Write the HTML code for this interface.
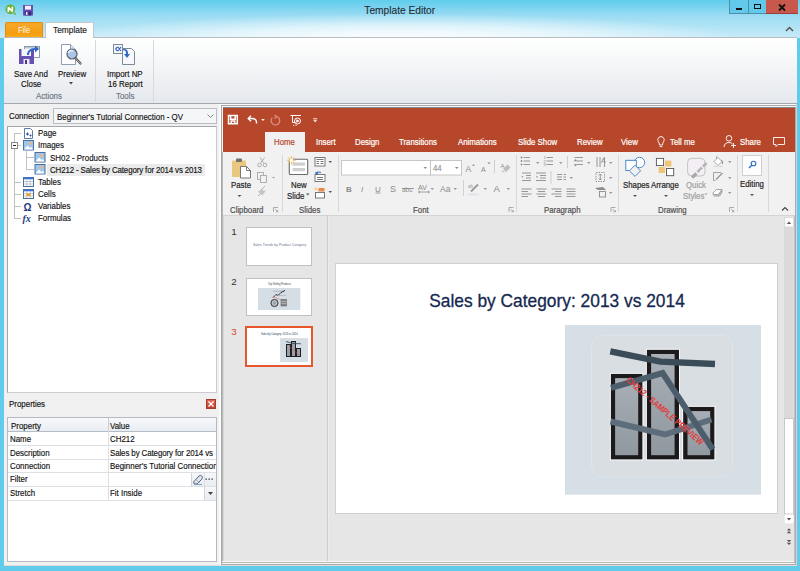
<!DOCTYPE html>
<html><head><meta charset="utf-8">
<style>
*{margin:0;padding:0;box-sizing:border-box}
html,body{width:800px;height:571px;overflow:hidden}
body{position:relative;background:#61cbec;font-family:"Liberation Sans",sans-serif;color:#222}
.a{position:absolute}
.t{position:absolute;white-space:nowrap;line-height:10px;font-size:8.8px;color:#111;-webkit-text-stroke:0.15px currentColor;transform:scaleX(.9);transform-origin:0 0}
svg{position:absolute;overflow:visible}
#title{left:0;top:0;width:800px;height:38px;background:radial-gradient(ellipse 340px 24px at 400px 38px,rgba(255,255,255,.95),rgba(255,255,255,.6) 50%,rgba(255,255,255,0)),linear-gradient(#5fcdec 0px,#6fd0ee 4px,#9bdcf3 16px,#c4eaf8 36px)}
#ribbon{left:4px;top:37px;width:793px;height:67px;background:linear-gradient(#ffffff,#fbfcfc 15%,#e5e8ed);border-top:1px solid #b9bcc0;border-bottom:1px solid #a4a8ac}
#leftp{left:4px;top:104px;width:217px;height:462px;background:#f0f0f0}
#ppt{left:221px;top:105px;width:576px;height:461px;background:#f6f6f6;border-left:1px solid #a4a6a8;border-top:1px solid #a4a6a8}
.tp{position:absolute;white-space:nowrap;line-height:10px;font-size:8.5px;color:#262626;-webkit-text-stroke:0.2px currentColor;transform:scaleX(.92);transform-origin:0 0}
.w{color:#fff}
.g{color:#444}
.pr{color:#262626}
.dis{color:#a6a6a6}
</style></head><body>
<!-- ===== TITLE BAR ===== -->
<div class="a" id="title"></div>
<svg style="left:0;top:0" width="40" height="20">
 <circle cx="10.3" cy="9.3" r="4.9" fill="#6cb33f"/>
 <circle cx="14.8" cy="13.8" r="1.1" fill="#6cb33f"/>
 <path d="M8.3 11.9V7.2L12.3 11.4V6.7" fill="none" stroke="#fff" stroke-width="1.6" stroke-linejoin="bevel"/>
 <rect x="23" y="5" width="10" height="10.5" fill="#6b4fb0"/>
 <rect x="25" y="5.8" width="6" height="3.8" fill="#f2f0f6"/>
 <rect x="24.5" y="11" width="7" height="4.5" fill="#4e3a96"/>
 <rect x="26" y="12" width="1.5" height="3" fill="#e8e4f0"/>
 <rect x="29" y="12" width="1.5" height="3" fill="#2d2070"/>
</svg>
<div class="t" style="left:364.3px;top:4.5px;font-size:10.2px;line-height:12px;color:#222b33;transform:none;-webkit-text-stroke:0.1px currentColor">Template Editor</div>
<div class="a" style="left:729px;top:0;width:20px;height:14px;border:1px solid #4f8ea6;border-top:none;background:#63c9ea"></div>
<div class="a" style="left:736px;top:8px;width:6px;height:2px;background:#111"></div>
<div class="a" style="left:748px;top:0;width:19px;height:14px;border:1px solid #4f8ea6;border-top:none;background:#63c9ea"></div>
<div class="a" style="left:754px;top:4px;width:7px;height:5px;border:1.5px solid #111"></div>
<div class="a" style="left:766px;top:0;width:32px;height:14px;background:#c9584c;border-bottom:1px solid #9a4038"></div>
<svg style="left:778px;top:4px" width="8" height="7"><path d="M1 0.5L7 6.5M7 0.5L1 6.5" stroke="#111" stroke-width="1.8"/></svg>
<div class="a" style="left:5px;top:22px;width:38px;height:16px;background:linear-gradient(#f7a82a,#f59d10 70%,#f8b020);border:1px solid #e08e10;border-bottom:none;border-radius:2px 2px 0 0"></div>
<div class="t" style="left:17.5px;top:24.8px;color:#fff8ec;-webkit-text-stroke:0;transform:scaleX(.86)">File</div>
<div class="a" style="left:45px;top:22px;width:49px;height:16px;background:#fff;border:1px solid #c6c9cc;border-bottom:none"></div>
<div class="t" style="left:53px;top:24.8px;color:#222;transform:scaleX(.95)">Template</div>
<div class="a" style="left:46px;top:37px;width:47px;height:1.5px;background:#fff;z-index:2"></div>
<svg style="left:785px;top:26px" width="9" height="6"><path d="M1 5L4.5 1.5L8 5" stroke="#555" stroke-width="1.5" fill="none"/></svg>

<!-- ===== APP RIBBON ===== -->
<div class="a" id="ribbon"></div>
<div class="a" style="left:95px;top:40px;width:1px;height:62px;background:#d6d9dd"></div>
<div class="a" style="left:153px;top:40px;width:1px;height:62px;background:#d6d9dd"></div>
<svg style="left:18px;top:45px" width="24" height="20">
 <rect x="6.5" y="1.5" width="15" height="11" fill="#fff" stroke="#8e9ba6"/>
 <rect x="7" y="2" width="14" height="1.5" fill="#b8c4ce"/>
 <rect x="1" y="4" width="15" height="15" fill="#6650b4"/>
 <rect x="3.5" y="4" width="9.5" height="7" fill="#f4f4f8"/>
 <rect x="5.5" y="14" width="6" height="5" fill="#eceaf4"/>
 <rect x="7" y="15" width="2" height="4" fill="#4a3a8c"/>
 <path d="M9 10C9 6 12 3 17 3L17 0.5L21 4L17 7.5L17 5C13 5 11 7 11 10Z" fill="#2f66c9"/>
</svg>
<svg style="left:60px;top:44px" width="24" height="22">
 <path d="M1.5 0.5H10.5L15.5 5.5V20.5H1.5Z" fill="#fff" stroke="#8da0b4"/>
 <path d="M10.5 0.5V5.5H15.5" fill="#dde6f0" stroke="#8da0b4"/>
 <circle cx="12" cy="10" r="5" fill="#a9c6ea" stroke="#555c66" stroke-width="1.2"/>
 <path d="M8 9C9 7 11 6 13 7" stroke="#eaf2fb" stroke-width="1.5" fill="none"/>
 <path d="M15.5 14L20.5 19.5" stroke="#444" stroke-width="2.2" stroke-linecap="round"/>
 <path d="M15.5 14L20.5 19.5" stroke="#ddd" stroke-width="0.8" stroke-linecap="round"/>
</svg>
<svg style="left:113px;top:43px" width="24" height="23">
 <rect x="0.5" y="1.5" width="9" height="9" fill="#f4f6f8" stroke="#7d8a96"/>
 <path d="M2.5 6L4.5 4M2.5 6L4.5 8M5 4L8 8M8 4L5 8" stroke="#2f5fc0" stroke-width="1.1" fill="none"/>
 <path d="M9.5 5.5H18.5L21.5 8.5V21.5H9.5Z" fill="#f6f8fb" stroke="#7d8a96"/>
 <path d="M10 6C13 5.5 15 7 15 10V11L17 11L14 15L11 11L13 11V10C13 8 12 7 10 7.5Z" fill="#2f66c9"/>
</svg>
<div class="t" style="left:13.8px;top:68.5px">Save And</div>
<div class="t" style="left:20.7px;top:78.5px">Close</div>
<div class="t" style="left:57.8px;top:68.5px">Preview</div>
<svg style="left:69px;top:82px" width="5" height="3"><path d="M0 0H4L2 2.5Z" fill="#444"/></svg>
<div class="t" style="left:36.4px;top:91px;color:#6b7383">Actions</div>
<div class="t" style="left:106.5px;top:69px">Import NP</div>
<div class="t" style="left:108px;top:79px">16 Report</div>
<div class="t" style="left:115.5px;top:91px;color:#6b7383">Tools</div>

<!-- ===== LEFT PANEL ===== -->
<div class="a" id="leftp"></div>
<div class="t" style="left:8.75px;top:110.7px">Connection</div>
<div class="a" style="left:53px;top:108px;width:164px;height:16px;background:#f5f6f7;border:1px solid #b9bec4"></div>
<div class="t" style="left:56.5px;top:111.6px">Beginner's Tutorial Connection - QV</div>
<svg style="left:207px;top:114px" width="7" height="5"><path d="M0.5 0.5L3.5 3.5L6.5 0.5" stroke="#888" stroke-width="1" fill="none"/></svg>
<!-- tree box -->
<div class="a" style="left:7px;top:126px;width:210px;height:267px;background:#fff;border:1px solid #a3a7ac;border-right-color:#c9ccd0;border-bottom-color:#c9ccd0"></div>
<div class="a" style="left:47px;top:164px;width:158px;height:12px;background:#ebebeb"></div>
<svg style="left:0;top:0" width="60" height="230">
 <g stroke="#c2c2c2" stroke-width="1" fill="none">
  <path d="M14.5 133V219M14.5 133.5H21M17.5 145.5H21M14.5 182.5H21M14.5 194.5H21M14.5 206.5H21M14.5 218.5H21M26.5 151V170M26.5 157.5H34M26.5 169.5H34"/>
 </g>
 <rect x="11.5" y="142.5" width="6" height="6" fill="#fff" stroke="#888"/>
 <path d="M13 145.5H16" stroke="#222"/>
 <!-- page icon -->
 <path d="M24.5 128.5H30.5L32.5 130.5V138.5H24.5Z" fill="#fff" stroke="#5a7ca8"/>
 <path d="M26 134H29M27.5 132.5V135.5M29.5 135.5H31.5M30.5 134.5V136.5" stroke="#2a4fa0" stroke-width="1"/>
 <!-- image icons -->
 <g id="imgico">
  <rect x="23.5" y="140.5" width="10" height="9.5" fill="#9cc8ef" stroke="#4d6f99"/>
  <circle cx="30" cy="143.5" r="1.6" fill="#f6b37c"/>
  <path d="M24 149.5L27.5 145.5L30 148L31.5 147L33 149.5Z" fill="#fff"/>
 </g>
 <use href="#imgico" x="11.5" y="12"/>
 <use href="#imgico" x="11.5" y="24"/>
 <!-- tables -->
 <rect x="23.5" y="177.5" width="10" height="9" fill="#fff" stroke="#4d6f99"/>
 <rect x="24" y="177.5" width="9" height="1.8" fill="#3a74d6"/>
 <path d="M24 181.5H33M24 184H33M26.8 179V186M30.2 179V186" stroke="#b0bccc" stroke-width="0.8"/>
 <!-- cells -->
 <rect x="23.5" y="189.5" width="10" height="9" fill="#fff" stroke="#4d6f99"/>
 <rect x="24" y="189.5" width="9" height="1.8" fill="#3a74d6"/>
 <path d="M24 193.5H33M24 196H33M26.8 191V198M30.2 191V198" stroke="#b0bccc" stroke-width="0.8"/>
 <rect x="26.5" y="193.5" width="4" height="2.5" fill="#e8a41c"/>
 <!-- omega -->
 <text x="23.5" y="210.5" font-family="Liberation Sans" font-weight="bold" font-size="10" fill="#1d3a82">Ω</text>
 <!-- fx -->
 <text x="22.5" y="222" font-family="Liberation Serif" font-style="italic" font-weight="bold" font-size="10" fill="#1d3a82">fx</text>
</svg>
<div class="t" style="left:38px;top:128.2px">Page</div>
<div class="t" style="left:38px;top:140.35px">Images</div>
<div class="t" style="left:50px;top:152.5px">SH02 - Products</div>
<div class="t" style="left:50px;top:164.65px;letter-spacing:-0.15px">CH212 - Sales by Category for 2014 vs 2013</div>
<div class="t" style="left:38px;top:176.8px">Tables</div>
<div class="t" style="left:38px;top:188.95px">Cells</div>
<div class="t" style="left:38px;top:201.1px">Variables</div>
<div class="t" style="left:38px;top:213.3px">Formulas</div>
<!-- properties -->
<div class="t" style="left:8.8px;top:398.8px">Properties</div>
<div class="a" style="left:206px;top:399px;width:10px;height:9.5px;background:linear-gradient(#e06a58,#c0402e);border:1px solid #a83828"></div>
<svg style="left:208px;top:401px" width="6" height="6"><path d="M0.5 0.5L5.5 5.5M5.5 0.5L0.5 5.5" stroke="#fff" stroke-width="1.4"/></svg>
<div class="a" style="left:7px;top:417px;width:210px;height:145px;background:#fff;border:1px solid #b3bac3"></div>
<div class="a" style="left:8px;top:418px;width:208px;height:13.5px;background:linear-gradient(#f7f8fa,#e9edf1);border-bottom:1px solid #b4bcc8"></div>
<div class="a" style="left:107.5px;top:418px;width:1px;height:13px;background:#c8cdd4"></div>
<div class="a" style="left:107.5px;top:431px;width:1px;height:69px;background:#dcdfe3"></div>
<div class="a" style="left:8px;top:445px;width:208px;height:1px;background:#dcdfe3"></div>
<div class="a" style="left:8px;top:458.7px;width:208px;height:1px;background:#dcdfe3"></div>
<div class="a" style="left:8px;top:472.4px;width:208px;height:1px;background:#dcdfe3"></div>
<div class="a" style="left:8px;top:486px;width:208px;height:1px;background:#dcdfe3"></div>
<div class="a" style="left:8px;top:499.6px;width:208px;height:1px;background:#dcdfe3"></div>
<div class="t" style="left:10.5px;top:420.5px">Property</div>
<div class="t" style="left:109.5px;top:420.5px">Value</div>
<div class="t" style="left:9.7px;top:434.2px">Name</div>
<div class="t" style="left:9.7px;top:447.6px">Description</div>
<div class="t" style="left:9.7px;top:461.1px">Connection</div>
<div class="t" style="left:9.7px;top:474.3px">Filter</div>
<div class="t" style="left:9.7px;top:487.9px">Stretch</div>
<div class="t" style="left:109.5px;top:434.2px">CH212</div>
<div class="t" style="left:109.5px;top:447.6px;letter-spacing:-0.12px">Sales by Category for 2014 vs</div>
<div class="a" style="left:109px;top:459px;width:107px;height:13px;overflow:hidden"><div class="t" style="left:0.5px;top:2.1px">Beginner's Tutorial Connection - QV</div></div>
<div class="a" style="left:190.5px;top:473px;width:25.5px;height:13px;background:linear-gradient(#f6f8fa,#e9edf1);border-left:1px solid #d0d4d8"></div>
<div class="a" style="left:204px;top:473px;width:1px;height:13px;background:#dde1e5"></div>
<svg style="left:191px;top:473px" width="13" height="13"><path d="M2.5 9L8 3Q9.5 1.8 11 3.2Q12.2 4.7 10.8 6.2L6 11H3.5Z" fill="#dfe7f2" stroke="#4a5260" stroke-width="0.9"/><path d="M5 6.5L8.5 10" stroke="#8a95a8" stroke-width="0.8"/><path d="M3 11.5H11" stroke="#7a9cc8" stroke-width="0.9"/></svg>
<svg style="left:204px;top:478px" width="11" height="3"><g fill="#333"><rect x="1.5" y="0.5" width="1.3" height="1.3"/><rect x="4.5" y="0.5" width="1.3" height="1.3"/><rect x="7.5" y="0.5" width="1.3" height="1.3"/></g></svg>
<div class="a" style="left:204px;top:487px;width:12px;height:12.5px;background:linear-gradient(#f6f8fa,#e9edf1);border-left:1px solid #d0d4d8"></div>
<svg style="left:207.5px;top:491.5px" width="5" height="3"><path d="M0 0H5L2.5 3Z" fill="#444"/></svg>
<div class="t" style="left:109.5px;top:487.9px">Fit Inside</div>
<!-- splitter strip -->
<div class="a" style="left:219px;top:104px;width:2px;height:462px;background:#fbfbfb"></div>

<!-- ===== PPT ===== -->
<div class="a" style="left:219px;top:104px;width:578px;height:1px;background:#fbfbfb"></div>
<div class="a" id="ppt"></div>
<div class="a" style="left:223px;top:107px;width:572px;height:46px;background:#b7472a;border-top:1px solid #7f8c8e"></div>
<div class="a" style="left:223px;top:152px;width:572px;height:64px;background:#f1f1f1;border-bottom:1px solid #d3d3d3"></div>
<div class="a" style="left:223px;top:216px;width:572px;height:345px;background:#e6e6e6"></div>
<div class="a" style="left:222px;top:152px;width:1px;height:410px;background:#bababa"></div>
<div class="a" style="left:223px;top:216px;width:1px;height:345px;background:#d6d6d6"></div>
<div class="a" style="left:335px;top:263px;width:443px;height:251px;background:#fff;border:1px solid #d0d0d0"></div>
<!-- QAT -->
<svg style="left:0;top:0" width="800" height="571">
 <g fill="none" stroke="#fff" stroke-width="1.5">
  <path d="M228.5 115.6H237.3V123.8H228.5Z"/>
  <path d="M230.6 115.6V119.2H235.2V115.6M231.2 123.8V121H234.8V123.8"/>
 </g>
 <path d="M256.5 123.5Q257 118 251 118.5H248.5" fill="none" stroke="#fff" stroke-width="1.4"/>
 <path d="M251 115.8L248.2 118.5L251 121.2" fill="none" stroke="#fff" stroke-width="1.4"/>
 <path d="M261.2 119H264.8L263 121Z" fill="#fff"/>
 <path d="M275.8 116.3A4.3 4.3 0 1 1 272.3 117.6" fill="none" stroke="#d9907e" stroke-width="1.3"/>
 <path d="M274.5 115L276.5 116.5L274.5 118.5" fill="none" stroke="#d9907e" stroke-width="1.2"/>
 <g fill="none" stroke="#fff" stroke-width="1">
  <path d="M290.5 115.5H301M292.5 115.5V122.5H295.5"/>
  <circle cx="297.5" cy="121" r="3"/>
  <path d="M296.8 119.8V122.2L298.8 121Z" fill="#fff"/>
 </g>
 <path d="M293 125.3H297" stroke="#fff" stroke-width="0.8" stroke-dasharray="1 0.6"/>
 <path d="M313.2 118.8H317.2" stroke="#fff" stroke-width="0.9"/>
 <path d="M313.2 120.3H317.2L315.2 122.3Z" fill="#fff"/>
</svg>
<!-- tabs -->
<div class="a" style="left:265px;top:132px;width:40.2px;height:21px;background:#f1f1f1"></div>
<div class="tp" style="left:274px;top:136.5px;color:#b7472a">Home</div>
<div class="tp w" style="left:316px;top:136.5px">Insert</div>
<div class="tp w" style="left:355px;top:136.5px">Design</div>
<div class="tp w" style="left:399px;top:136.5px">Transitions</div>
<div class="tp w" style="left:458px;top:136.5px">Animations</div>
<div class="tp w" style="left:518px;top:136.5px">Slide Show</div>
<div class="tp w" style="left:576.5px;top:136.5px">Review</div>
<div class="tp w" style="left:621px;top:136.5px">View</div>
<div class="tp w" style="left:669.6px;top:136.5px">Tell me</div>
<div class="tp w" style="left:739.5px;top:136.5px">Share</div>
<svg style="left:0;top:0" width="800" height="571">
 <g fill="none" stroke="#fff" stroke-width="0.9">
  <path d="M658.3 141.5A3.2 3.2 0 1 1 663.7 141.5Q662.5 143 662.5 145H659.5Q659.5 143 658.3 141.5Z"/>
  <path d="M659.7 146.6H662.3"/>
  <circle cx="729" cy="138.3" r="2.8"/>
  <path d="M724 147Q724.5 142.5 729 142.5Q731.5 142.5 732.5 144M733.5 143V148M731 145.5H736"/>
  <path d="M773.5 137.5H784.5V144.5H778L776 146.5V144.5H773.5Z"/>
 </g>
</svg>
<!-- group separators -->
<div class="a" style="left:281.5px;top:155px;width:1px;height:57px;background:#d8d8d8"></div>
<div class="a" style="left:338px;top:155px;width:1px;height:57px;background:#d8d8d8"></div>
<div class="a" style="left:515.5px;top:155px;width:1px;height:57px;background:#d8d8d8"></div>
<div class="a" style="left:618px;top:155px;width:1px;height:57px;background:#d8d8d8"></div>
<div class="a" style="left:737px;top:155px;width:1px;height:57px;background:#d8d8d8"></div>
<div class="a" style="left:767.5px;top:155px;width:1px;height:57px;background:#d8d8d8"></div>
<!-- labels -->
<div class="tp" style="left:230.9px;top:180px">Paste</div>
<div class="tp" style="left:229.7px;top:204.5px;color:#505050">Clipboard</div>
<div class="tp" style="left:290.5px;top:180px">New</div>
<div class="tp" style="left:287px;top:190.5px">Slide</div>
<div class="tp" style="left:299px;top:204.5px;color:#505050">Slides</div>
<div class="tp" style="left:413px;top:204.5px;color:#505050">Font</div>
<div class="tp" style="left:543.5px;top:204.5px;color:#505050">Paragraph</div>
<div class="tp" style="left:622.5px;top:180px">Shapes</div>
<div class="tp" style="left:651px;top:180px">Arrange</div>
<div class="tp" style="left:685.5px;top:180px;color:#a0a0a0">Quick</div>
<div class="tp" style="left:683px;top:190.5px;color:#a0a0a0">Styles</div>
<div class="tp" style="left:657.5px;top:204.5px;color:#505050">Drawing</div>
<div class="tp" style="left:739.5px;top:179.1px">Editing</div>
<svg style="left:0;top:0" width="800" height="571">
 <!-- dropdown arrows -->
 <g fill="#555">
  <path d="M237.5 195H241.5L239.5 197Z"/>
  <path d="M306 193.5H309.5L307.75 195.5Z"/>
  <path d="M633 195H637L635 197Z"/>
  <path d="M664 195H668L666 197Z"/>
  <path d="M750 194H754L752 196Z"/>
  <path d="M328.5 161H332L330.25 163Z"/>
  <path d="M328.5 191H332L330.25 193Z"/>
 </g>
 <g fill="#9a9a9a">
  <path d="M704.5 193.5H707.5L706 195Z"/>
  <path d="M272 177H275L273.5 178.5Z"/>
  <path d="M423.5 167H427L425.25 169Z"/>
  <path d="M455 167H458.5L456.75 169Z"/>
  <path d="M430.5 188H434L432.25 190Z"/>
  <path d="M453.5 188H457L455.25 190Z"/>
  <path d="M483.5 188H487L485.25 190Z"/>
  <path d="M506.5 188H510L508.25 190Z"/>
  <path d="M536 162H539.5L537.75 164Z"/>
  <path d="M559 162H562.5L560.75 164Z"/>
  <path d="M587 162H590.5L588.75 164Z"/>
  <path d="M609 162H612.5L610.75 164Z"/>
  <path d="M569.5 177H573L571.25 179Z"/>
  <path d="M609 177H612.5L610.75 179Z"/>
  <path d="M609 192H612.5L610.75 194Z"/>
  <path d="M728 161H731.5L729.75 163Z"/>
  <path d="M728 177H731.5L729.75 179Z"/>
  <path d="M728 192H731.5L729.75 194Z"/>
 </g>
 <!-- launchers -->
 <g fill="none" stroke="#999" stroke-width="0.8">
  <path d="M273.5 212V207.5H278M275 209L277.8 211.8M276 211.8H277.8V210"/>
  <path d="M509 212V207.5H513.5M510.5 209L513.3 211.8M511.5 211.8H513.3V210"/>
  <path d="M611 212V207.5H615.5M612.5 209L615.3 211.8M613.5 211.8H615.3V210"/>
  <path d="M729.5 212V207.5H734M731 209L733.8 211.8M732 211.8H733.8V210"/>
 </g>
 <path d="M782 210.5L785 207.5L788 210.5" fill="none" stroke="#444" stroke-width="1.1"/>
 <!-- paste -->
 <rect x="232" y="160.5" width="14" height="16.5" rx="1" fill="#e9c77f"/>
 <rect x="236" y="158.5" width="6" height="3.5" rx="1" fill="#707070"/>
 <path d="M240.5 166.5H246.5L250.5 170.5V178H240.5Z" fill="#fff" stroke="#6a6a6a" stroke-width="0.9"/>
 <path d="M246.5 166.5V170.5H250.5" fill="none" stroke="#6a6a6a" stroke-width="0.9"/>
 <!-- cut/copy/painter (disabled) -->
 <g fill="none" stroke="#a8a8a8" stroke-width="0.9">
  <circle cx="259.5" cy="165" r="1.8"/><circle cx="265" cy="165" r="1.8"/>
  <path d="M260.5 163.5L264.5 157.5M264 163.5L260 157.5"/>
  <rect x="257.5" y="172.5" width="6" height="7"/>
  <rect x="260.5" y="175.5" width="6" height="7" fill="#f1f1f1"/>
  <path d="M258 196L262 192M261 190L265 186M262.5 193.5L265.5 190.5"/>
 </g>
 <path d="M258 191.5L262 189L265 192L262 195.5Z" fill="#c4c4c4"/>
 <!-- new slide -->
 <rect x="289.3" y="159.3" width="18.4" height="15.2" rx="1" fill="#fff" stroke="#6a6a6a" stroke-width="1.1"/>
 <rect x="292.5" y="162.5" width="12.5" height="3.2" fill="#cfcfcf"/>
 <rect x="292.5" y="168" width="12.5" height="3.2" fill="#cfcfcf"/>
 <circle cx="291.4" cy="160.3" r="2.2" fill="#f1f1f1"/>
 <g stroke="#f0b030" stroke-width="0.8"><path d="M291.4 156V164.6M287.1 160.3H295.7M288.4 157.3L294.4 163.3M294.4 157.3L288.4 163.3"/></g>
 <circle cx="291.4" cy="160.3" r="1.6" fill="#fff"/>
 <!-- layout/reset/section -->
 <g fill="none" stroke="#6a6a6a" stroke-width="0.9">
  <rect x="315" y="157.5" width="10" height="8.5" fill="#fff"/>
  <path d="M316.5 159.5H323.5M316.5 161.5H319M320.5 161.5H323.5M316.5 163.5H319M320.5 163.5H323.5"/>
  <rect x="315" y="174.5" width="10" height="7" fill="#fff"/>
  <path d="M317 177.5H323M317 179.5H323"/>
  <rect x="315.5" y="192.5" width="9" height="5.5" fill="#fff"/>
 </g>
 <path d="M316 174Q317 171 321 172.5" fill="none" stroke="#2c6cc4" stroke-width="1.2"/>
 <path d="M315 172L316.2 174.8L318.5 173.2Z" fill="#2c6cc4"/>
 <rect x="318.5" y="188" width="6" height="3.5" fill="#e88a4c"/>
 <path d="M314.5 187.5L317.5 190.5M317 187.5L314.5 190" stroke="#f0b642" stroke-width="0.8"/>
 <!-- font combos -->
 <rect x="341.5" y="160.5" width="89" height="14.5" fill="#fff" stroke="#c6c6c6"/>
 <rect x="430.5" y="160.5" width="31" height="14.5" fill="#fff" stroke="#c6c6c6"/>
 <path d="M423.5 167H427L425.25 169Z M455 167H458.5L456.75 169Z" fill="#8a8a8a"/>
 <!-- font row2 glyphs -->
 <g font-family="Liberation Sans" fill="#8a8a8a" font-size="8">
  <text x="346" y="191.5" font-weight="bold">B</text>
  <text x="361" y="191.5" font-style="italic">I</text>
  <text x="375" y="191.5">U</text>
  <text x="390" y="192" font-size="9">S</text>
  <text x="402" y="191.5" font-size="6.5">abc</text>
  <text x="418" y="189.5" font-size="7">AV</text>
  <text x="440" y="191.5" font-size="8.5">Aa</text>
  <text x="493.5" y="192" font-size="9.5">A</text>
  <text x="465.5" y="171.5" font-size="8.5">A</text>
  <text x="500.5" y="168" font-size="6">A</text>
  <text x="481" y="172" font-size="7">A</text>
 </g>
 <g fill="none" stroke="#8a8a8a" stroke-width="0.8">
  <path d="M375.5 193H380.5"/>
  <path d="M402 188.5H414"/>
  <path d="M418.5 192H429.5M420 190.8L418.5 192L420 193.2M428 190.8L429.5 192L428 193.2"/>
  <path d="M472 165.8L473.5 164L475 165.8ZM487.5 162.5L489 164.3L490.5 162.5Z" fill="#8a8a8a" stroke="none"/>
  <path d="M494.5 160V173M463.5 180V196" stroke="#c8c8c8"/>
  <path d="M503 169L507.5 164.5L510.5 167.5L506 172Z" fill="#bdbdbd" stroke="none"/>
  <path d="M502 170.5L504 172.5" stroke="#8a8a8a"/>
 </g>
 <path d="M471 191.5L478 184.5" stroke="#9a9a9a" stroke-width="1.8"/>
 <path d="M468 194.5H479" stroke="#e6dbe8" stroke-width="1.5"/>
 <text x="468" y="187.5" font-family="Liberation Sans" font-size="4.5" fill="#9a9a9a">ab</text>
 <!-- paragraph icons -->
 <g fill="none" stroke="#8c8c8c" stroke-width="0.9">
  <path d="M523.5 157.5H530M523.5 161H530M523.5 164.5H530"/>
  <path d="M546.5 157.5H553M546.5 161H553M546.5 164.5H553"/>
  <path d="M574.5 157.5H583M577 161H583M577 164.5H583"/>
  <path d="M597 157V167M600 157V167M604.5 157V167"/>
  <path d="M522 173H531M526 175.5H531M526 178H531M522 180.5H531"/>
  <path d="M536 173H546M540 175.5H546M540 178H546M536 180.5H546"/>
  <path d="M557 174.5H562M557 177H562M557 179.5H562M563.5 174.5H566M563.5 177H566M563.5 179.5H566"/>
  <path d="M596 172.5H604.5V181.5H596Z" stroke-dasharray="1.5 1"/>
  <path d="M600.25 174V180M598.8 175.5L600.25 174L601.7 175.5M598.8 178.5L600.25 180L601.7 178.5"/>
  <path d="M521.5 189H531.5M521.5 191.5H528M521.5 194H531.5M521.5 196.5H528"/>
  <path d="M536.5 189H546.5M538 191.5H545M536.5 194H546.5M538 196.5H545"/>
  <path d="M551.5 189H561.5M555 191.5H561.5M551.5 194H561.5M555 196.5H561.5"/>
  <path d="M566.5 189H575.5M566.5 191.5H575.5M566.5 194H575.5M566.5 196.5H575.5"/>
  <rect x="599.5" y="191.5" width="6" height="5.5" fill="#f1f1f1"/>
 </g>
 <g fill="#8c8c8c">
  <circle cx="521.5" cy="157.5" r="0.9"/><circle cx="521.5" cy="161" r="0.9"/><circle cx="521.5" cy="164.5" r="0.9"/>
  <path d="M523.5 176.7L521.8 175.7V177.7Z"/>
  <path d="M538.2 176.7L536.5 175.7V177.7Z"/>
  <path d="M575.5 159L573.7 161.3H577.3ZM575.5 166.5L573.7 164.2H577.3Z"/>
  <path d="M602 157L604.5 162H599.5Z" fill="none"/>
  <path d="M595 188L603 187L606 190H598Z"/>
 </g>
 <g font-family="Liberation Sans" font-size="4" fill="#8c8c8c"><text x="543.5" y="159">1</text><text x="543.5" y="162.5">2</text><text x="543.5" y="166">3</text></g>
 <text x="601" y="163" font-family="Liberation Sans" font-size="7" fill="#8c8c8c">A</text>
 <path d="M551 171V184M567.5 156V168" stroke="#cfcfcf" stroke-width="1"/>
 <!-- shapes -->
 <g fill="none" stroke="#3a7fcc" stroke-width="0.9">
  <circle cx="639.5" cy="162.5" r="5.2" fill="#fff"/>
  <rect x="625.8" y="160.3" width="10.5" height="10.2" fill="#fff"/>
  <path d="M635 165.2L640.6 170.8L635 176.4L629.4 170.8Z" fill="#f1f1f1"/>
 </g>
 <!-- arrange -->
 <rect x="665" y="160.6" width="6.4" height="6" fill="#eec678"/>
 <rect x="658.6" y="167" width="6.4" height="6" fill="#eec678"/>
 <rect x="656.4" y="158.4" width="7.2" height="7.2" fill="#fff" stroke="#555" stroke-width="0.9"/>
 <rect x="666.5" y="168.5" width="7.2" height="7.2" fill="#fff" stroke="#555" stroke-width="0.9"/>
 <!-- quick styles -->
 <rect x="687.6" y="158.4" width="17.4" height="17.6" rx="4" fill="#f3eff5" stroke="#bdbdbd" stroke-width="0.9"/>
 <path d="M692 177.5L696.5 173.5" stroke="#a8a8a8" stroke-width="3.2"/>
 <path d="M697.5 172L702 167.5M703 166.5L706.5 163" stroke="#b4b4b4" stroke-width="2.6"/>
 <path d="M700 171.5L702.5 169" stroke="#f1f1f1" stroke-width="1"/>
 <!-- fill/outline/effects -->
 <g fill="none" stroke="#9a9a9a" stroke-width="0.9">
  <path d="M714 161.5L718 157.5L722 161.5L718 165.5Z" fill="#fff"/>
  <path d="M716.5 158.5Q716 156 717.5 156" />
  <path d="M721.5 160Q723 162 722.5 164" stroke-width="1.2"/>
  <path d="M713 166.5H723" stroke="#e3d6de" stroke-width="1.2"/>
  <path d="M713.5 172.5H721M713.5 172.5V180.5L715.5 180.5"/>
  <path d="M716 179.5L722.5 173" stroke-width="1.4"/>
  <path d="M713 193L716.5 189.5H722L718.5 194.5H713Z" fill="#fff"/>
  <path d="M718.5 194.5L722 190V192L719.5 196H713.5" fill="#c8c8c8"/>
 </g>
 <!-- editing -->
 <rect x="742.5" y="155.5" width="19" height="20" fill="#fdfdfd" stroke="#cfcfcf"/>
 <circle cx="753.5" cy="163.5" r="2.3" fill="none" stroke="#2f6fc5" stroke-width="1.1"/>
 <path d="M752 165L749 168" stroke="#2f6fc5" stroke-width="1.5"/>
</svg>
<div class="tp" style="left:432.5px;top:162.5px;color:#999">44</div>
<!-- slide panel -->
<div class="a" style="left:327px;top:216px;width:1px;height:345px;background:#cdcdcd"></div>
<div class="a" style="left:328px;top:216px;width:1px;height:345px;background:#ececec"></div>
<div class="a" style="left:246px;top:227px;width:66px;height:38.5px;background:#fff;border:1px solid #c0c0c0"></div>
<div class="a" style="left:246px;top:277.5px;width:66px;height:38px;background:#fff;border:1px solid #c0c0c0"></div>
<div class="a" style="left:245px;top:326.3px;width:68.3px;height:40.5px;background:#fff;border:2px solid #e8562d"></div>
<div class="tp" style="left:231.3px;top:226.6px;font-size:9.8px;color:#333;-webkit-text-stroke:0;transform:none">1</div>
<div class="tp" style="left:231.3px;top:277px;font-size:9.8px;color:#333;-webkit-text-stroke:0;transform:none">2</div>
<div class="tp" style="left:231.3px;top:327.1px;font-size:9.8px;color:#d24726;-webkit-text-stroke:0;transform:none">3</div>
<svg style="left:0;top:0" width="800" height="571">
 <text x="253" y="246" font-family="Liberation Sans" font-size="3.2" fill="#5a6a8a" textLength="53">Sales Trends by Product Category</text>
 <text x="268" y="285.3" font-family="Liberation Sans" font-size="2.6" fill="#444" textLength="23">Top Selling Products</text>
 <rect x="258" y="288" width="42.3" height="22" fill="#d5dde5"/>
 <path d="M273 291.2H283" stroke="#8a9098" stroke-width="0.5"/>
 <path d="M273 297.5L276 294.5L278 295.5L281 292.5L285 290.5" fill="none" stroke="#2a2a2a" stroke-width="1"/>
 <path d="M273 296.5L286 302" stroke="#e06060" stroke-width="0.5"/>
 <path d="M274 295.5H286" stroke="#9aa" stroke-width="0.5"/>
 <circle cx="274.5" cy="303" r="3.6" fill="#9aa2aa" stroke="#333" stroke-width="0.9"/><circle cx="274.5" cy="303" r="2.2" fill="none" stroke="#eee" stroke-width="0.5"/>
 <rect x="281" y="299.5" width="5.5" height="6.5" fill="#888" stroke="#555" stroke-width="0.5"/>
 <path d="M281 301.5H286.5M281 303.5H286.5" stroke="#ddd" stroke-width="0.4"/>
 <text x="261" y="335" font-family="Liberation Sans" font-size="2.6" fill="#2a3a5a" textLength="36.6">Sales by Category: 2013 vs 2014</text>
 <rect x="280.1" y="338.1" width="28" height="23.9" fill="#d5dde5"/>
 <g fill="#99a0a8" stroke="#1e1e1e" stroke-width="1">
  <rect x="286.5" y="344.5" width="4" height="12"/>
  <rect x="291.5" y="341.5" width="4" height="15"/>
  <rect x="296.5" y="348.5" width="4" height="8"/>
 </g>
 <path d="M286 341.5L293 343.5L301 343.8" stroke="#3c4e5c" stroke-width="0.9" fill="none"/>
 <path d="M289 346L300 356" stroke="#e04848" stroke-width="0.5"/>
 <!-- main slide title -->
 <text x="429.2" y="306.6" font-family="Liberation Sans" font-size="19" fill="#15284f" stroke="#15284f" stroke-width="0.3" textLength="255.6" lengthAdjust="spacingAndGlyphs">Sales by Category: 2013 vs 2014</text>
 <!-- main image -->
 <rect x="565" y="325" width="196" height="169.7" fill="#d6dee6"/>
 <rect x="591.5" y="335.2" width="141" height="141.6" rx="11" fill="#d9dee3" stroke="#dfe5ea" stroke-width="1"/>
 <defs><linearGradient id="bg1" x1="0" y1="0" x2="0" y2="1"><stop offset="0" stop-color="#a9b0b7"/><stop offset="1" stop-color="#8f979f"/></linearGradient></defs>
 <g fill="url(#bg1)" stroke="#1c1a1a" stroke-width="4.4">
  <rect x="612.9" y="375.9" width="27.5" height="81.5"/>
  <rect x="648.9" y="351.8" width="27.9" height="105.6"/>
  <rect x="685.3" y="408.9" width="27.1" height="48.5"/>
 </g>
 <g fill="none" stroke="#fff" stroke-width="0.8">
  <rect x="610.3" y="373.3" width="32.7" height="86.7"/>
  <rect x="646.3" y="349.2" width="33.1" height="110.8"/>
  <rect x="682.7" y="406.3" width="32.3" height="53.7"/>
 </g>
 <path d="M610.5 421.5L665 434.5L711.5 419.5" fill="none" stroke="#5e6d7b" stroke-width="6"/>
 <path d="M611 387.8L662.6 373L712.8 449.3" fill="none" stroke="#4c5d6c" stroke-width="6"/>
 <path d="M610.3 351.4L660.4 361.6L715 364" fill="none" stroke="#3b4c59" stroke-width="6.3"/>
 <text x="0" y="0" font-family="Liberation Sans" font-weight="bold" font-size="9" fill="#e23a3a" transform="translate(625.5 381) rotate(40.8)" textLength="99" lengthAdjust="spacingAndGlyphs">CH212 - SAMPLE PREVIEW</text>
 <!-- scrollbar -->
 <rect x="784" y="227" width="9.5" height="297" fill="#dadada"/>
 <rect x="784.5" y="217.5" width="9" height="9.5" fill="#fff" stroke="#d4d4d4" stroke-width="0.8"/>
 <path d="M786.8 224H791.2L789 221.6Z" fill="#555"/>
 <rect x="784.5" y="418.5" width="9" height="95.5" fill="#fff" stroke="#bdbdbd" stroke-width="0.8"/>
 <rect x="784.5" y="514.5" width="9" height="9" fill="#fff"/>
 <path d="M786.8 518H791.2L789 520.4Z" fill="#555"/>
 <g fill="#555"><path d="M786.8 530.5H791.2L789 528.2Z"/><path d="M786.8 533.3H791.2L789 531Z"/>
 <path d="M786.8 540H791.2L789 542.3Z"/><path d="M786.8 542.8H791.2L789 545.1Z"/></g>
</svg>
<div class="a" style="left:222px;top:561px;width:573px;height:1px;background:#fafafa"></div>
<div class="a" style="left:222px;top:562px;width:573px;height:1px;background:#b4b4b4"></div>
<div class="a" style="left:222px;top:563px;width:574px;height:1px;background:#fafafa"></div>
<div class="a" style="left:222px;top:564px;width:574px;height:1px;background:#a8a8a8"></div>
<div class="a" style="left:4px;top:565px;width:793px;height:1px;background:#e4dcd8"></div>

<div class="a" style="left:794px;top:216px;width:1px;height:346px;background:#c0c0c0"></div>
<div class="a" style="left:795px;top:107px;width:1px;height:458px;background:#a9abad"></div>
<div class="a" style="left:796px;top:104px;width:1px;height:462px;background:#d9d3d0"></div>
</body></html>
